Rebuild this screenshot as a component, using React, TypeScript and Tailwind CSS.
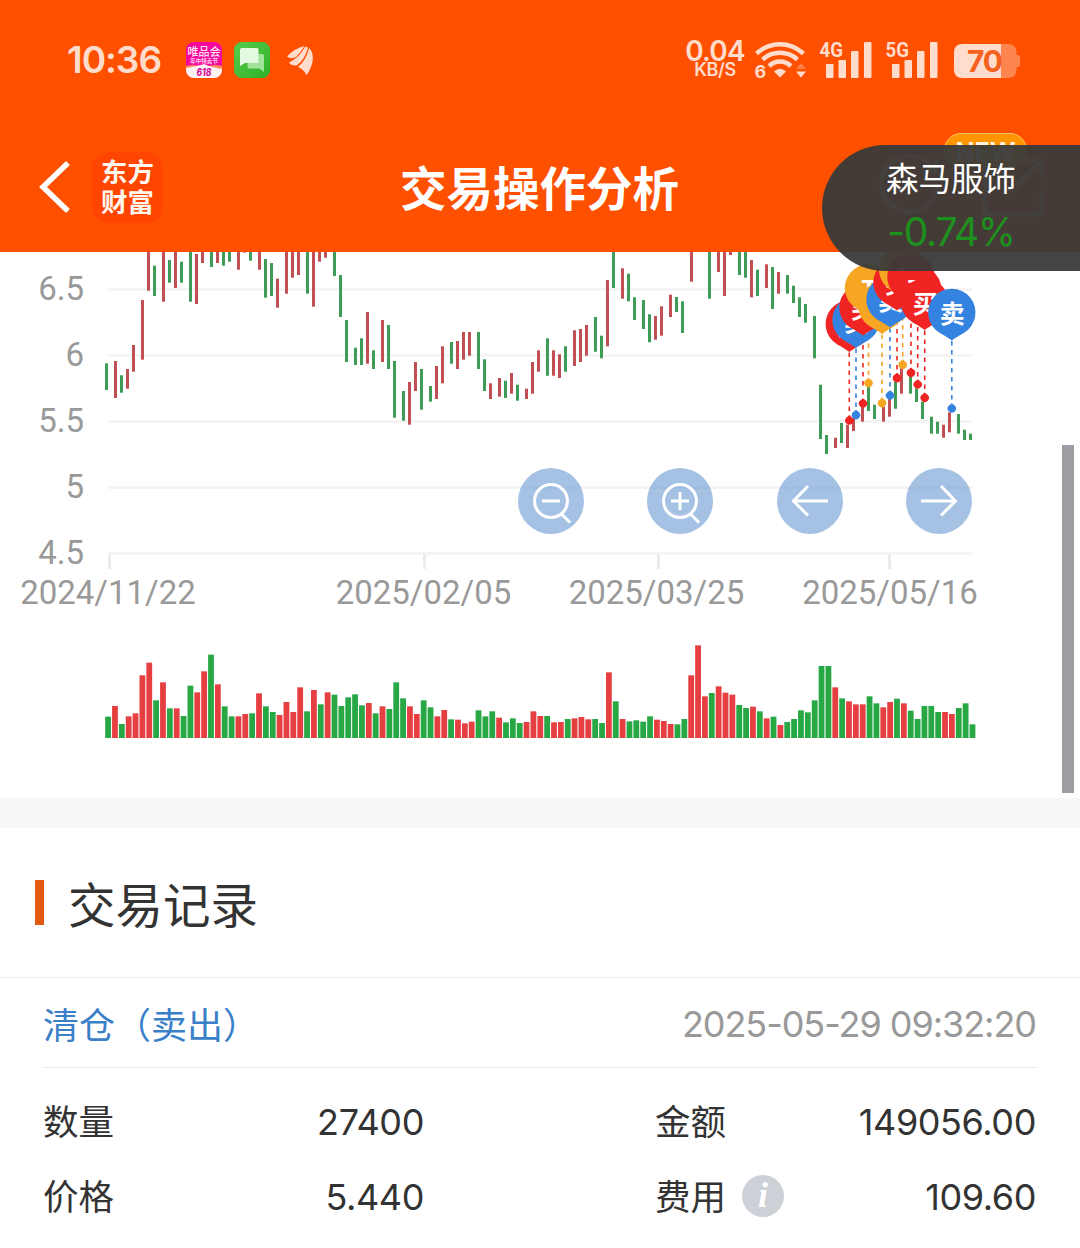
import type { ReactNode } from "react";

const UP = "#c05053";
const DOWN = "#3f9c57";

// [x, top, bottom, rising]
type Candle = [number, number, number, 0 | 1];

const candles: Candle[] = [
  [105, 363.3, 390, 0], [114, 361, 398, 1], [120, 375.3, 392.7, 0], [126, 369, 388.7, 1],
  [132, 345, 371.7, 1], [141, 300, 359.7, 1], [147, 240, 290.7, 1], [153, 265.7, 296, 0],
  [162, 240, 301.7, 1], [168, 260, 282.7, 0], [174, 240, 288, 1], [180, 261.7, 282.7, 0],
  [189, 240, 301.7, 0], [195, 254, 304, 1], [201, 240, 263, 1], [210, 240, 267, 0],
  [216, 240, 263, 1], [222, 240, 265.7, 0], [228, 240, 261.7, 0], [237, 240, 269.7, 1],
  [243, 240, 252.7, 1], [249, 240, 260.7, 0], [258, 240, 269.7, 1], [264, 259, 297.7, 0],
  [270, 263, 296, 0], [276, 278.7, 307.7, 1], [285, 240, 293.7, 1], [291, 240, 277.7, 1],
  [297, 240, 275, 1], [306, 240, 293.7, 0], [312, 240, 306.7, 1], [318, 240, 261.7, 1],
  [324, 240, 257.7, 1], [333, 240, 276, 0], [339, 275, 317, 0], [345, 320, 362, 0],
  [354, 347.7, 365, 0], [360, 338.3, 365, 0], [366, 312, 363.7, 1], [372, 350.3, 369, 0],
  [381, 320, 362, 1], [387, 325, 369, 0], [393, 361, 417.7, 0], [402, 391, 420.7, 0],
  [408, 382, 424.7, 1], [414, 362, 391, 1], [420, 369, 409.7, 0], [429, 386, 401.7, 0],
  [435, 366, 399, 1], [441, 346.3, 383.3, 1], [450, 342, 363.7, 0], [456, 341, 369, 1],
  [462, 332, 359.7, 1], [468, 332, 355.7, 1], [477, 332, 369, 0], [483, 359.3, 391, 0],
  [489, 383.3, 399, 1], [498, 378, 396.7, 1], [504, 380.7, 398, 0], [510, 373, 393.7, 1],
  [516, 384.7, 400.7, 0], [525, 388.7, 399, 1], [531, 362, 393.7, 1], [537, 350.3, 371.7, 1],
  [546, 338.3, 375.7, 0], [552, 350.3, 375.7, 1], [558, 354.3, 378, 1], [564, 346.3, 371.7, 0],
  [573, 330.3, 366, 1], [579, 329, 362, 1], [585, 325, 355.7, 1], [594, 317, 351.7, 0],
  [600, 335.7, 358.3, 0], [606, 280, 346.3, 1], [612, 240, 288, 0], [621, 268.3, 298.7, 1],
  [627, 273.7, 301.3, 0], [633, 297.3, 320, 0], [642, 300, 329, 0], [648, 314.3, 342.3, 0],
  [654, 316, 339.7, 1], [660, 306.3, 335.7, 1], [669, 294.7, 317, 1], [675, 297, 312, 0],
  [681, 301.3, 333, 0], [690, 240, 281.7, 1], [708, 240, 298.7, 0], [717, 240, 272, 1],
  [723, 240, 296, 1], [729, 240, 255, 1], [738, 240, 275, 0], [744, 240, 277.7, 0],
  [750, 260, 297.3, 1], [756, 269.7, 296, 0], [765, 264.3, 288, 1], [771, 267, 309, 0],
  [777, 272, 293.7, 1], [786, 275, 293.7, 0], [792, 285.7, 303, 0], [798, 297.3, 317, 0],
  [804, 304, 322.7, 0], [813, 316, 358.3, 0], [819, 384.7, 439, 0], [825, 435, 454, 0],
  [834, 437.7, 448, 1], [840, 423, 443, 0], [846, 424.7, 448, 1], [852, 418, 431, 1],
  [861, 406.7, 421.7, 1], [867, 386.7, 411, 0], [873, 404.7, 419, 0], [882, 406.7, 421.7, 1],
  [888, 399, 416.7, 1], [894, 381.7, 408.7, 0], [900, 368.3, 393.7, 1], [909, 375.7, 393.7, 0],
  [915, 388.3, 402, 0], [921, 401.7, 419, 0], [930, 416.7, 433.7, 0], [936, 421.7, 433.7, 0],
  [942, 424.7, 437.7, 1], [948, 412.3, 432.3, 1], [957, 414, 433.7, 0], [963, 429.7, 440, 0],
  [969, 433.7, 440, 0],
];

// a negative value is a falling day
const volumes = [
  -64, 96, -42, 65, 74, 188, 226, -113, 167, -89, 89, -66, -157, 137, 200, -250, 161, -95, -65, 65, 72,
  -74, 134, -95, -78, 69, 108, 78, 152, -80, 144, -101, 137, -130, -96, -122, -131, -98, 105, -74, 95, -87,
  -167, -119, 95, 72, -113, -92, 65, 84, -56, 55, 44, 49, -83, -65, -80, 61, -47, -59, -45, 48, 80,
  66, -66, 47, 48, -57, 59, 63, 56, -57, -45, 197, -110, 57, -50, -53, -49, -65, 55, 51, 42, -41,
  -57, 188, 278, 125, -135, 155, 136, 130, -99, -90, 94, -80, 59, -64, 39, -48, -57, -83, -77, -113, -216,
  -216, 152, -119, 110, 101, 101, -125, -104, 92, 108, -118, 104, -82, -57, -96, -96, -78, 78, 72, -90, -104, -41,
];

const RED = "#f12424";
const BLUE = "#3583e0";
const ORANGE = "#f6a623";

const trades = [
  { x: 849.3, pin: 324.5, dot: 420.7, color: RED, label: "买" },
  { x: 856, pin: 320.5, dot: 415.3, color: BLUE, label: "卖" },
  { x: 863, pin: 308, dot: 403.7, color: RED, label: "买" },
  { x: 868.5, pin: 288.5, dot: 383.3, color: ORANGE, label: "T" },
  { x: 882, pin: 306.5, dot: 403.3, color: ORANGE, label: "T" },
  { x: 890, pin: 300, dot: 395.7, color: BLUE, label: "卖" },
  { x: 897, pin: 283, dot: 378.3, color: RED, label: "买" },
  { x: 902.7, pin: 270, dot: 365, color: ORANGE, label: "T" },
  { x: 911, pin: 277.5, dot: 373, color: RED, label: "买" },
  { x: 917.7, pin: 290, dot: 384.7, color: RED, label: "买" },
  { x: 924.7, pin: 302.5, dot: 398, color: RED, label: "买" },
  { x: 951.8, pin: 313, dot: 408.7, color: BLUE, label: "卖" },
];

const priceTicks = [
  { y: 289.5, label: "6.5" },
  { y: 355.5, label: "6" },
  { y: 421.5, label: "5.5" },
  { y: 487.5, label: "5" },
  { y: 553.5, label: "4.5" },
];

const dateTicks = [
  { x: 109.5, text: 108, label: "2024/11/22" },
  { x: 424.5, text: 423.5, label: "2025/02/05" },
  { x: 658.5, text: 656.5, label: "2025/03/25" },
  { x: 889.5, text: 890, label: "2025/05/16" },
];

function Signal({ type }: { type: string }) {
  return (
    <svg className="overflow-visible" width="54" height="40" viewBox="0 0 54 40" fill="currentColor">
      <text x="0.5" y="17" fontSize="21" fontWeight="700" fontFamily="Roboto, sans-serif" textLength="23.500" lengthAdjust="spacingAndGlyphs">
        {type}
      </text>
      <rect x="7" y="24" width="7.5" height="14" rx="1" />
      <rect x="19.5" y="20" width="7.5" height="18" rx="1" />
      <rect x="32" y="11" width="7.5" height="27" rx="1" />
      <rect x="45" y="2" width="7.5" height="36" rx="1" />
    </svg>
  );
}

function StatusBar() {
  return (
    <div className="flex h-[118px] items-center justify-between pr-[60px] pl-[67px] text-[#ffdccb]">
      <div className="flex items-center pt-0.5">
        <span className="w-[119px] pb-0.5 text-[37px] leading-none font-semibold tracking-[-1px]">10:36</span>
        <svg width="36" height="36" viewBox="0 0 36 36">
          <defs>
            <clipPath id="vip">
              <rect width="36" height="36" rx="8" />
            </clipPath>
          </defs>
          <g clipPath="url(#vip)" fontFamily="Noto Sans CJK SC, sans-serif" textAnchor="middle">
            <rect width="36" height="36" fill="#f5089b" />
            <path d="M0 24Q10 21 18 26Q27 21 36 24V36H0Z" fill="#ff8a5c" />
            <path d="M0 26Q12 24 18 22Q25 25 36 27V36H0Z" fill="#fff3f5" />
            <text x="18" y="14" fontSize="11" fontWeight="500" fill="#ffe3f4">唯品会</text>
            <text x="18" y="21" fontSize="5.600" fontWeight="700" fill="#ffd0ec">年中特卖节</text>
            <text x="18" y="34.2" fontSize="10" fontWeight="800" fontStyle="italic" fontFamily="Inter, sans-serif" fill="#d4149a" textLength="15" lengthAdjust="spacingAndGlyphs">
              618
            </text>
          </g>
        </svg>
        <svg className="ml-3" width="36" height="36" viewBox="0 0 36 36">
          <defs>
            <linearGradient id="chat" x1="0" y1="0" x2="1" y2="1">
              <stop offset="0" stopColor="#58cc4c" />
              <stop offset="1" stopColor="#2fb02b" />
            </linearGradient>
          </defs>
          <rect width="36" height="36" rx="8" fill="url(#chat)" />
          <path d="M14 12H28.5Q30 12 30 13.500V30L25.500 26.500H15.500Q13.500 26.500 13.500 24.500Z" fill="#a2e39a" />
          <path d="M8 6H23Q24.500 6 24.500 7.500V19.500Q24.500 21 23 21H11L6 24V8Q6 6 8 6Z" fill="#e4f9e1" />
        </svg>
        <svg className="ml-4" width="28" height="32" viewBox="0 0 28 32" fill="currentColor">
          <path d="M1 12.500Q9 4 18.500 2Q15 8 10 13Q5 15.500 1 12.500Z" />
          <path d="M3 18.500Q13 14 19 3Q20.500 2.500 22 3.500Q19 16 10.500 21.500Q5 22 3 18.500Z" />
          <path d="M12 23Q20.500 16 23 4Q28 9 26.500 18Q24.500 26 20.500 31Q17.500 25 12 23Z" />
        </svg>
      </div>
      <div className="flex items-center pt-px">
        <div className="flex w-[58px] flex-col items-center font-semibold">
          <span className="text-[28px] leading-[20px] tracking-[-0.8px]">0.04</span>
          <span className="text-[18px] leading-[17px] tracking-[-0.4px]">KB/S</span>
        </div>
        <svg className="ml-2.5 overflow-visible" width="54" height="40" viewBox="0 0 54 40" fill="none" stroke="currentColor" strokeWidth="4.500">
          <path d="M2.500 13.500Q13 4.300 26 4.300T49.500 13.500" />
          <path d="M8.500 19.500Q16 12.800 26 12.800T43.500 19.500" />
          <path d="M15 26Q20 21.500 26 21.500T37 26" />
          <path d="M20 31.500Q26 26 32 31.500L26 37.500Z" fill="currentColor" stroke="none" />
          <path d="M42 29L47 23L52 29Z" fill="#ff7f45" stroke="none" />
          <path d="M42 31.500H52L47 37.500Z" fill="currentColor" stroke="none" />
          <text x="0.5" y="38" fontSize="18" fontWeight="700" fontFamily="Inter, sans-serif" fill="currentColor" stroke="none">6</text>
        </svg>
        <div className="ml-[11px]">
          <Signal type="4G" />
        </div>
        <div className="ml-3">
          <Signal type="5G" />
        </div>
        <svg className="ml-[15px]" width="66" height="40" viewBox="0 -1 66 40">
          <path d="M47 3H54Q62.500 3 62.500 11.500V14H64Q66 14 66 16V24Q66 26 64 26H62.500V28.500Q62.500 37 54 37H47Z" fill="#ff854f" />
          <path d="M8.500 3H47V37H8.500Q0 37 0 28.500V11.500Q0 3 8.500 3Z" fill="currentColor" />
          <text x="31" y="31" textAnchor="middle" fontSize="30" fontWeight="700" fontFamily="Inter, sans-serif" fill="#f5611f" textLength="36">70</text>
        </svg>
      </div>
    </div>
  );
}

function Header() {
  return (
    <header className="h-[252px] bg-[#ff5000]">
      <StatusBar />
      <div className="grid h-[134px] grid-cols-[1fr_auto_1fr] items-center pt-1 pr-[35px] pl-[38px]">
        <div className="flex items-center">
          <svg width="34" height="54" viewBox="0 0 34 54" fill="none" stroke="#fff" strokeWidth="5.500">
            <path d="M30 3L5 27L30 51" />
          </svg>
          <div className="ml-5 flex h-[71px] w-[71px] flex-col items-center justify-center rounded-2xl bg-[#ff4500] pb-0.5 font-['Noto_Sans_CJK_SC',sans-serif] text-[26.500px] leading-[30px] font-bold text-[#fff6ee]">
            <span>东方</span>
            <span>财富</span>
          </div>
        </div>
        <h1 className="pt-[5px] pr-1 text-[46.500px] leading-none font-bold text-white">交易操作分析</h1>
        <div className="relative justify-self-end">
          <svg width="168" height="64" viewBox="0 0 168 64" fill="none" stroke="#fff" strokeOpacity="0.5" strokeWidth="4.500">
            <path d="M57 16A28 28 0 1 0 60 32M46 16H59V4" />
            <path d="M138 5H108V59H165V36M148 5H165V22M165 5L132 38" />
          </svg>
          <div className="absolute -top-[22px] left-[67px] flex h-[34px] w-[83px] items-center justify-center rounded-full border border-[#ffc46b] bg-[#ff9500] pt-1 text-[25px] leading-none font-bold text-[#fff3dc]">
            NEW
          </div>
        </div>
      </div>
    </header>
  );
}

function TradeChart() {
  return (
    <svg className="block" width="1080" height="546" viewBox="0 252 1080 546">
      {priceTicks.map((t) => (
        <g key={t.label}>
          <line x1="108" x2="972" y1={t.y} y2={t.y} stroke="#f4f4f4" strokeWidth="3" />
          <text x="84" y={t.y + 10} textAnchor="end" fontSize="33" fontFamily="Roboto, sans-serif" fill="#999">
            {t.label}
          </text>
        </g>
      ))}
      {dateTicks.map((t) => (
        <g key={t.label}>
          <line x1={t.x} x2={t.x} y1="554" y2="569" stroke="#ececec" strokeWidth="3" />
          <text x={t.text} y="604" textAnchor="middle" fontSize="33" fontFamily="Roboto, sans-serif" fill="#999">
            {t.label}
          </text>
        </g>
      ))}

      {candles.map(([x, top, bottom, rising]) => (
        <rect key={x} x={x} y={top} width="3" height={bottom - top} fill={rising ? UP : DOWN} />
      ))}

      {trades.map((t) => (
        <g key={t.x}>
          <line x1={t.x} x2={t.x} y1={t.pin + 28} y2={t.dot} stroke={t.color} strokeWidth="1.600" strokeDasharray="4.500 4.500" />
          <path d={`M${t.x} ${t.dot - 5.5}l3.400 2.800a4.200 4.200 0 1 1 -6.800 0z`} fill={t.color} />
        </g>
      ))}
      {trades.map((t) => (
        <g key={t.x}>
          <path
            d={`M${t.x} ${t.pin + 27.5}q-3.500 -3 -12 -7.500a23.700 23.700 0 1 1 24 0q-8.500 4.500 -12 7.500z`}
            fill={t.color}
          />
          <text
            x={t.x + 0.5}
            y={t.pin + 10}
            textAnchor="middle"
            fontSize="25"
            fontWeight="700"
            fontFamily="Noto Sans CJK SC, sans-serif"
            fill="#fff"
          >
            {t.label}
          </text>
        </g>
      ))}

      {volumes.map((v, i) => (
        <rect
          key={i}
          x={105.2 + i * 6.86}
          y={738 - Math.abs(v) / 3}
          width="5.800"
          height={Math.abs(v) / 3}
          fill={v > 0 ? "#e63f42" : "#28a745"}
        />
      ))}
    </svg>
  );
}

function ChartButton({ children }: { children: ReactNode }) {
  return (
    <button className="h-[66px] w-[66px] rounded-full bg-[#4b86c9]/50">
      <svg width="66" height="66" viewBox="0 0 66 66" fill="none" stroke="#fff" strokeWidth="3">
        {children}
      </svg>
    </button>
  );
}

function ChartControls() {
  return (
    <div className="absolute top-[216px] left-[518px] flex w-[454px] justify-between">
      <ChartButton>
        <circle cx="33" cy="33" r="16.500" />
        <path d="M24 33H42M43.500 46L52 54.500" />
      </ChartButton>
      <ChartButton>
        <circle cx="33" cy="33" r="16.500" />
        <path d="M24 33H42M33 24V42M43.500 46L52 54.500" />
      </ChartButton>
      <ChartButton>
        <path d="M51 33H17M31 18L16.500 33L31 47.500" />
      </ChartButton>
      <ChartButton>
        <path d="M15 33H49M35 18L49.500 33L35 47.500" />
      </ChartButton>
    </div>
  );
}

function QuotePill() {
  return (
    <div className="absolute top-[145px] right-0 flex h-[126px] w-[258px] flex-col items-center rounded-l-full bg-[#3a3a3a]/95 pt-[17px]">
      <span className="text-[32.500px] leading-9 text-white">森马服饰</span>
      <span className="mt-3.5 text-[39px] leading-10 font-[370] tracking-[-1.300px] text-[#1e901e]">-0.74%</span>
    </div>
  );
}

function Field({ label, value, info }: { label: string; value: string; info?: boolean }) {
  return (
    <div className="flex h-[75px] items-center justify-between">
      <div className="flex items-center">
        <span className="pt-[3px]">{label}</span>
        {info && (
          <span className="mb-0.5 ml-4 flex h-[42px] w-[42px] items-center justify-center rounded-full bg-[#cdd0d6] pb-0.5 font-['Liberation_Serif',serif] text-[36px] leading-none font-bold text-white italic">
            i
          </span>
        )}
      </div>
      <span className="text-[36px] font-[370] tracking-[-0.4px]">{value}</span>
    </div>
  );
}

function TradeRecords() {
  return (
    <section className="bg-white">
      <div className="flex h-[150px] items-center border-b border-[#ededed] pl-[35px]">
        <div className="h-[45px] w-[9px] bg-[#e2590f]" />
        <h2 className="ml-6 pt-[7px] text-[47.500px] leading-none text-[#333]">交易记录</h2>
      </div>
      <div className="mx-[43px]">
        <div className="flex h-[90px] items-center justify-between border-b border-[#ededed]">
          <span className="pt-1.5 text-[36px] text-[#3a80c8]">清仓（卖出）</span>
          <span className="pt-[3px] pr-px text-[36px] font-[370] tracking-[-1.050px] text-[#999]">2025-05-29 09:32:20</span>
        </div>
        <div className="grid grid-cols-[381px_381px] justify-between pt-4 pr-px text-[35.500px] text-[#333]">
          <Field label="数量" value="27400" />
          <Field label="金额" value="149056.00" />
          <Field label="价格" value="5.440" />
          <Field label="费用" value="109.60" info />
        </div>
      </div>
    </section>
  );
}

export default function App() {
  return (
    <div className="relative h-[1248px] w-[1080px] overflow-hidden bg-white font-[Inter,'Noto_Sans_CJK_SC',sans-serif]">
      <Header />
      <div className="relative h-[546px]">
        <TradeChart />
        <ChartControls />
        <div className="absolute top-[193px] right-[6px] h-[348px] w-3 bg-[#9d9da4]" />
      </div>
      <div className="h-[30px] bg-[#f7f7f7]" />
      <TradeRecords />
      <QuotePill />
    </div>
  );
}
